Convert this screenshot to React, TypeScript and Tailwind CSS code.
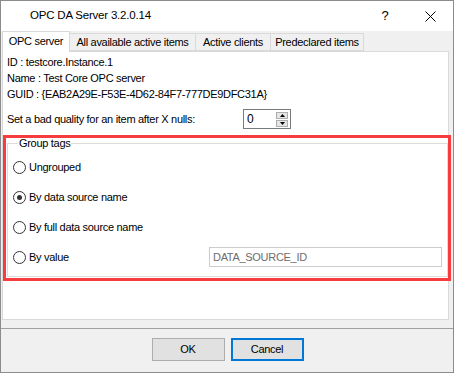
import React from "react";

const tabs = [
  { label: "OPC server", w: "w-[68px]" },
  { label: "All available active items", w: "w-[126px]" },
  { label: "Active clients", w: "w-[75px]" },
  { label: "Predeclared items", w: "w-[93px]" },
];

const options = ["Ungrouped", "By data source name", "By full data source name", "By value"];

function Radio({ checked }: { checked?: boolean }) {
  return (
    <span className="w-[13px] h-[13px] rounded-full border border-[#333333] bg-white flex items-center justify-center shrink-0">
      {checked && <span className="w-[5px] h-[5px] rounded-full bg-[#333333]" />}
    </span>
  );
}

export default function App() {
  return (
    <div
      className="w-[454px] h-[373px] flex flex-col bg-[#f0f0f0] border border-[#8c8c8c] text-[11px] tracking-[-0.3px] text-black whitespace-nowrap"
      style={{ fontFamily: '"Liberation Sans", Arial, sans-serif' }}
    >
      {/* title bar */}
      <div className="h-[30px] bg-white flex items-center shrink-0">
        <span className="pl-[29px] text-[11.5px] tracking-[-0.2px]">OPC DA Server 3.2.0.14</span>
        <span className="ml-auto w-[20px] text-center text-[13px] mr-[30px]">?</span>
        <svg width="11" height="11" viewBox="0 0 11 11" className="mr-[17px]">
          <path d="M0.5 0.5 L10.5 10.5 M10.5 0.5 L0.5 10.5" stroke="#000" strokeWidth="1" />
        </svg>
      </div>

      {/* tabs */}
      <div className="h-[21px] flex items-end pl-[1px] shrink-0 relative z-10">
        {tabs.map((t, i) =>
          i === 0 ? (
            <div
              key={t.label}
              className={`${t.w} h-[21px] bg-white border border-b-0 border-[#d9d9d9] flex items-center justify-center pb-[1px]`}
            >
              {t.label}
            </div>
          ) : (
            <div
              key={t.label}
              className={`${t.w} h-[18px] mb-[1px] bg-[#f0f0f0] border border-l-0 border-[#d9d9d9] flex items-center justify-center`}
            >
              {t.label}
            </div>
          )
        )}
      </div>

      {/* panel */}
      <div className="ml-[1px] w-[447px] h-[269px] -mt-[1px] bg-white border border-[#d9d9d9] flex flex-col shrink-0">
        <div className="pl-[4px] pt-[2px] flex flex-col">
          <div className="h-[16px] leading-[16px]">ID : testcore.Instance.1</div>
          <div className="h-[16px] leading-[16px]">Name : Test Core OPC server</div>
          <div className="h-[16px] leading-[16px]">GUID : {"{EAB2A29E-F53E-4D62-84F7-777DE9DFC31A}"}</div>
          <div className="mt-[7px] h-[20px] flex items-center">
            <span className="w-[236px]">Set a bad quality for an item after X nulls:</span>
            <div className="w-[48px] h-[20px] border border-[#7a7a7a] flex items-center justify-between">
              <span className="pl-[3px] text-[12px]">0</span>
              <div className="flex flex-col gap-[1px] pr-[2px]">
                <div className="w-[12px] h-[7px] bg-[#e6e6e6] border border-[#adadad] flex items-center justify-center">
                  <svg width="5" height="3" viewBox="0 0 5 3"><path d="M2.5 0 L5 3 L0 3 Z" fill="#000" /></svg>
                </div>
                <div className="w-[12px] h-[7px] bg-[#e6e6e6] border border-[#adadad] flex items-center justify-center">
                  <svg width="5" height="3" viewBox="0 0 5 3"><path d="M0 0 L5 0 L2.5 3 Z" fill="#000" /></svg>
                </div>
              </div>
            </div>
          </div>
        </div>

        {/* highlighted group */}
        <div className="mt-[6px] w-[448px] h-[146px] border-[3px] border-[#f73c3d] flex flex-col shrink-0">
          <fieldset className="ml-[1px] mr-[1px] mb-[2px] flex-1 border border-[#dcdcdc] px-[5px] pb-[9px] flex flex-col">
            <legend className="ml-[5px] px-[1px] leading-[11px]">Group tags</legend>
            <div className="pt-[8px] flex flex-col gap-[10px]">
              {options.map((o, i) => (
                <div key={o} className="h-[20px] flex items-center">
                  <div className="w-[196px] flex items-center gap-[3px]">
                    <Radio checked={i === 1} />
                    <span>{o}</span>
                  </div>
                  {i === 3 && (
                    <div className="w-[233px] h-[20px] border border-[#cccccc] bg-white flex items-center pl-[3px] text-[#6d6d6d]">
                      DATA_SOURCE_ID
                    </div>
                  )}
                </div>
              ))}
            </div>
          </fieldset>
        </div>
      </div>

      {/* footer */}
      <div className="mt-[8px] border-t border-[#a0a0a0] flex-1 flex justify-center items-start pt-[9px] pl-[1px]">
        <button className="w-[73px] h-[23px] bg-[#e1e1e1] border border-[#adadad]">OK</button>
        <button className="ml-[6px] w-[73px] h-[23px] bg-[#e1e1e1] border-2 border-[#0078d7]">Cancel</button>
      </div>
    </div>
  );
}
